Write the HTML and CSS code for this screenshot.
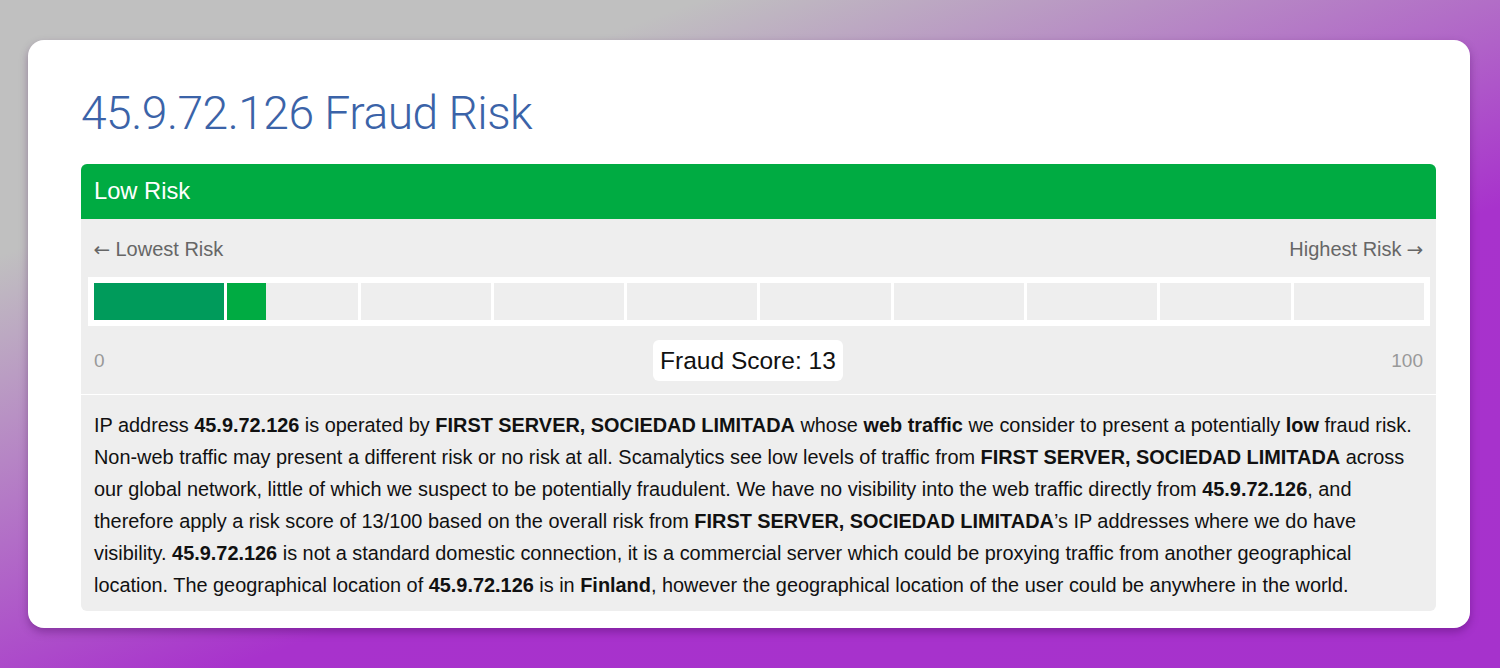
FILE: index.html
```html
<!DOCTYPE html>
<html lang="en">
<head>
<meta charset="utf-8">
<title>45.9.72.126 Fraud Risk</title>
<link rel="stylesheet" href="styles.css">
</head>
<body>
<main class="card">
  <h1 class="title">45.9.72.126 Fraud Risk</h1>
  <section class="panel">
    <header class="panel-head">Low Risk</header>
    <div class="panel-body">
      <div class="range-labels">
        <span><span class="arrow">&larr;</span> Lowest Risk</span>
        <span>Highest Risk <span class="arrow">&rarr;</span></span>
      </div>
      <div class="meter">
        <div class="seg"><div class="fill fill-dark" style="width:100%"></div></div>
        <div class="seg"><div class="fill fill-light" style="width:30%"></div></div>
        <div class="seg"></div>
        <div class="seg"></div>
        <div class="seg"></div>
        <div class="seg"></div>
        <div class="seg"></div>
        <div class="seg"></div>
        <div class="seg"></div>
        <div class="seg"></div>
      </div>
      <div class="scale">
        <span class="scale-end">0</span>
        <span class="score">Fraud Score: 13</span>
        <span class="scale-end">100</span>
      </div>
    </div>
    <p class="desc">IP address <b>45.9.72.126</b> is operated by <b>FIRST SERVER, SOCIEDAD LIMITADA</b> whose <b>web traffic</b> we consider to present a potentially <b>low</b> fraud risk. Non-web traffic may present a different risk or no risk at all. Scamalytics see low levels of traffic from <b>FIRST SERVER, SOCIEDAD LIMITADA</b> across our global network, little of which we suspect to be potentially fraudulent. We have no visibility into the web traffic directly from <b>45.9.72.126</b>, and therefore apply a risk score of 13/100 based on the overall risk from <b>FIRST SERVER, SOCIEDAD LIMITADA</b>’s IP addresses where we do have visibility. <b>45.9.72.126</b> is not a standard domestic connection, it is a commercial server which could be proxying traffic from another geographical location. The geographical location of <b>45.9.72.126</b> is in <b>Finland</b>, however the geographical location of the user could be anywhere in the world.</p>
  </section>
</main>
</body>
</html>
```
FILE: styles.css
```css
* { box-sizing: border-box; }

html, body { height: 100%; }

body {
  margin: 0;
  padding: 40px 30px 0 28px;
  background: linear-gradient(160deg, #c0c0c0 0%, #c0c0c0 21%, #a832cc 62%, #a632cc 100%);
  font-family: "Liberation Sans", Arial, Helvetica, sans-serif;
  overflow: hidden;
}

.card {
  width: 1442px;
  height: 588px;
  background: #fff;
  border-radius: 16px;
  padding: 42px 34px 0 53px;
  box-shadow: 0 4px 8px rgba(60, 0, 80, 0.35);
}

.title {
  margin: 0 0 20px;
  font-family: Roboto, "Liberation Sans", sans-serif;
  font-weight: 300;
  font-size: 46.2px;
  line-height: 62px;
  color: #3b63a8;
  letter-spacing: -0.5px;
}

.panel {
  width: 1355px;
  border-radius: 6px;
  background: #eeeeee;
  overflow: hidden;
}

.panel-head {
  height: 55px;
  background: #00ab42;
  color: #fff;
  font-size: 23.7px;
  line-height: 55px;
  padding-left: 13px;
}

.panel-body {
  border-bottom: 1px solid #fff;
}

.range-labels {
  display: flex;
  justify-content: space-between;
  padding: 17px 13px 0 13px;
  height: 58px;
  font-size: 20px;
  line-height: 26px;
  color: #666;
}

.arrow {
  font-family: "DejaVu Sans", sans-serif;
  font-size: 19px;
  transform: scaleX(1.05);
  display: inline-block;
}

.meter {
  display: flex;
  gap: 3px;
  margin: 0 6px 0 7px;
  padding: 6px;
  background: #fff;
  height: 49px;
}

.seg {
  flex: 1;
  background: #eeeeee;
  display: flex;
}

.fill { height: 100%; }
.fill-dark { background: #009b5b; }
.fill-light { background: #00ab42; }

.scale {
  display: flex;
  justify-content: space-between;
  align-items: center;
  height: 68px;
  padding: 1px 13px 0;
}

.scale-end {
  font-size: 19px;
  color: #999;
}

.score {
  background: #fff;
  border-radius: 6px;
  padding: 0 7px;
  height: 41px;
  line-height: 41px;
  font-size: 24.5px;
  color: #111;
  margin-left: 0;
}

.desc {
  margin: 0;
  padding: 14px 6px 10px 13px;
  font-size: 19.9px;
  line-height: 32px;
  color: #111;
}

.desc b { font-weight: 700; }
```
